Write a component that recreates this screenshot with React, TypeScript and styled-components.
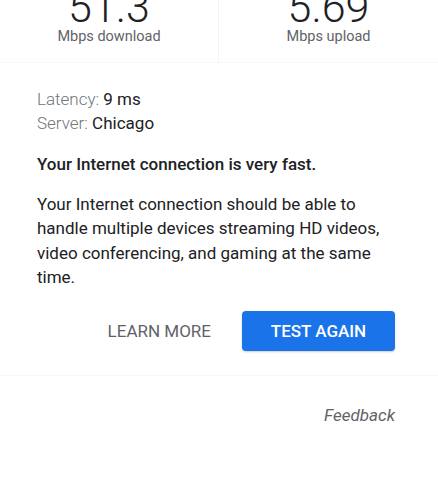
import React from "react";
import styled, { createGlobalStyle } from "styled-components";

const Global = createGlobalStyle`
  html, body { margin: 0; padding: 0; background: #fff; }
  body { font-family: Roboto, "Noto Sans", Arial, sans-serif; -webkit-font-smoothing: antialiased; }
  * { box-sizing: border-box; }
`;

const Page = styled.div`
  width: 438px;
  overflow: hidden;
`;

const Card = styled.section`
  border-bottom: 1px solid #f7f7f7;
`;

const StatsRow = styled.div`
  display: grid;
  grid-template-columns: 218px 1fr;
  margin-top: -12px;
  border-bottom: 1px solid #f8f8f8;
`;

const Stat = styled.div<{ $divider?: boolean }>`
  display: flex;
  flex-direction: column;
  align-items: center;
  padding-bottom: 15px;
  border-left: ${(p) => (p.$divider ? "1px solid #f3f3f3" : "none")};
`;

const StatValue = styled.div`
  font-size: 43px;
  line-height: 38px;
  font-weight: 300;
  color: #202124;
`;

const StatLabel = styled.div`
  font-size: 14.5px;
  line-height: 21px;
  color: #5f6368;
`;

const Body = styled.div`
  padding: 24px 43px 24px 37px;
  display: flex;
  flex-direction: column;
`;

const MetaLine = styled.div`
  font-size: 17px;
  line-height: 24px;
  color: #202124;
`;

const MetaKey = styled.span`
  color: #70757a;
  font-weight: 300;
`;

const Headline = styled.div`
  margin-top: 17px;
  font-size: 17px;
  line-height: 24px;
  font-weight: 500;
  color: #202124;
`;

const Paragraph = styled.p`
  margin: 16px 0 0;
  font-size: 17px;
  line-height: 24.4px;
  color: #202124;
`;

const Actions = styled.div`
  margin-top: 21px;
  display: flex;
  justify-content: flex-end;
  align-items: center;
  gap: 31px;
`;

const TextButton = styled.button`
  background: none;
  border: none;
  padding: 0;
  font-family: inherit;
  font-size: 17px;
  font-weight: 400;
  color: #5f6368;
`;

const PrimaryButton = styled.button`
  height: 40px;
  width: 153px;
  border: none;
  border-radius: 4px;
  background: #1a73e8;
  color: #fff;
  font-family: inherit;
  font-size: 17px;
  font-weight: 500;
  box-shadow: 0 1px 2px rgba(60, 64, 67, 0.25);
`;

const Footer = styled.div`
  display: flex;
  justify-content: flex-end;
  padding: 27px 43px 0 0;
`;

const FeedbackLink = styled.a`
  font-size: 17px;
  line-height: 24px;
  font-style: italic;
  color: #5f6368;
  text-decoration: none;
`;

export default function App() {
  return (
    <Page>
      <Global />
      <Card>
        <StatsRow>
          <Stat>
            <StatValue>51.3</StatValue>
            <StatLabel>Mbps download</StatLabel>
          </Stat>
          <Stat $divider>
            <StatValue>5.69</StatValue>
            <StatLabel>Mbps upload</StatLabel>
          </Stat>
        </StatsRow>
        <Body>
          <MetaLine>
            <MetaKey>Latency:</MetaKey> 9 ms
          </MetaLine>
          <MetaLine>
            <MetaKey>Server:</MetaKey> Chicago
          </MetaLine>
          <Headline>Your Internet connection is very fast.</Headline>
          <Paragraph>
            Your Internet connection should be able to handle multiple devices
            streaming HD videos, video conferencing, and gaming at the same time.
          </Paragraph>
          <Actions>
            <TextButton>LEARN MORE</TextButton>
            <PrimaryButton>TEST AGAIN</PrimaryButton>
          </Actions>
        </Body>
      </Card>
      <Footer>
        <FeedbackLink href="#">Feedback</FeedbackLink>
      </Footer>
    </Page>
  );
}
